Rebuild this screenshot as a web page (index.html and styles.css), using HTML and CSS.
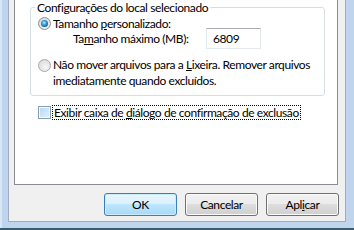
FILE: index.html
```html
<!DOCTYPE html>
<html lang="pt-BR">
  <head>
    <meta charset="UTF-8" />
    <meta name="viewport" content="width=device-width, initial-scale=1.0" />
    <title>Propriedades da Lixeira</title>

    <link rel="stylesheet" href="styles.css">
  </head>
  <body>
    <div class="window">
      <div class="dialog">
        <div class="panel">
          <fieldset class="group">
            <legend>Configurações do local selecionado</legend>
            <div class="optionRow">
              <span class="radio checked"></span>
              <span>Tamanho <u>p</u>ersonalizado:</span>
            </div>
            <div class="sizeRow">
              <span class="sizeLabel">Ta<u>m</u>anho máximo (MB):</span>
              <span class="textBox">6809</span>
            </div>
            <div class="optionRow optionTwo">
              <span class="radio"></span>
              <span>Não mover arquivos para a <u>L</u>ixeira. Remover arquivos<br>imediatamente quando excluídos.</span>
            </div>
          </fieldset>
          <div class="checkRow">
            <span class="checkbox"></span>
            <span class="focusLabel">Exibir caixa de <u>d</u>iálogo de confirmação de exclusão</span>
          </div>
        </div>
        <div class="buttons">
          <button class="default">OK</button>
          <button>Cancelar</button>
          <button>Apl<u>i</u>car</button>
        </div>
      </div>
    </div>
  </body>
</html>
```

FILE: styles.css
```css
body {
  margin: 0;
  font-family: Lato, "Noto Sans", sans-serif;
  font-size: 12px;
  letter-spacing: -0.4px;
  color: #000;
  white-space: nowrap;
}
.window {
  width: 354px;
  height: 230px;
  box-sizing: border-box;
  padding: 0 8px 6px 8px;
  background-color: #bfd5ee;
  border-bottom: 2px solid #3a5b6c;
  box-shadow: inset 2px 0 0 #d9e6f5;
}
.dialog {
  height: 222px;
  box-sizing: border-box;
  background-color: #f0f0f0;
  border: 1px solid #9eadbf;
  border-top: none;
  display: flex;
  flex-direction: column;
}
.panel {
  height: 185px;
  box-sizing: border-box;
  margin: 0 7px 0 5px;
  background-color: white;
  border: 1px solid #898c95;
  border-top: none;
}
.group {
  margin: 0 12px 0 15px;
  padding: 0 4px 6px 4px;
  border: 1px solid #d5dfe5;
  border-radius: 3px;
}
.group legend {
  padding: 0 2px;
  line-height: 15px;
}
.optionRow {
  display: flex;
  align-items: flex-start;
  gap: 2px;
  margin-top: 1px;
  margin-left: 3px;
  line-height: 15px;
}
.optionRow .radio {
  margin-top: 1px;
}
.optionTwo {
  margin-top: 8px;
  line-height: 16px;
}
.optionTwo .radio {
  margin-top: 2px;
}
.sizeRow {
  display: flex;
  align-items: center;
  height: 21px;
  margin-top: -3px;
  padding-left: 38px;
}
.sizeLabel {
  width: 133px;
}
.textBox {
  width: 55px;
  height: 21px;
  box-sizing: border-box;
  padding-left: 6px;
  line-height: 19px;
  border: 1px solid #e3e9ef;
  border-top-color: #abadb3;
}
.radio {
  flex: none;
  width: 13px;
  height: 13px;
  box-sizing: border-box;
  border-radius: 50%;
  border: 1px solid #a9a9a9;
  background: radial-gradient(circle at 60% 65%, #f6f6f6, #d4d4d4);
  display: flex;
  align-items: center;
  justify-content: center;
}
.radio.checked {
  border-color: #8e8f8f;
}
.radio.checked::after {
  content: "";
  width: 7px;
  height: 7px;
  border-radius: 50%;
  background: radial-gradient(circle at 45% 40%, #c3ecff 0, #37a3e6 35%, #0f4f8a 80%);
}
.checkRow {
  display: flex;
  align-items: center;
  gap: 2px;
  height: 15px;
  margin-top: 9px;
  margin-left: 23px;
}
.checkbox {
  width: 13px;
  height: 13px;
  box-sizing: border-box;
  border: 1px solid #8b9db3;
  background: linear-gradient(135deg, #b6d7f3, #e3f1fc);
  box-shadow: inset 0 0 0 1px #f4f9fe;
}
.focusLabel {
  padding: 0 1px;
  line-height: 13px;
  outline: 1px dotted #000;
}
.buttons {
  display: flex;
  justify-content: flex-end;
  gap: 8px;
  margin-top: 8px;
  padding-right: 6px;
}
button {
  width: 73px;
  height: 23px;
  padding: 0;
  font-family: inherit;
  font-size: 12px;
  letter-spacing: -0.4px;
  color: #000;
  border: 1px solid #707070;
  border-radius: 3px;
  background: linear-gradient(#f2f2f2, #ebebeb 50%, #dddddd 50%, #cfcfcf);
  box-shadow: inset 0 0 0 1px #fbfbfb;
}
button.default {
  border-color: #3c7fb1;
  background: linear-gradient(#eaf6fd, #d9f0fc 50%, #bee6fd 50%, #a7d9f5);
  box-shadow: inset 0 0 0 1px #c8ecfb;
}
```
